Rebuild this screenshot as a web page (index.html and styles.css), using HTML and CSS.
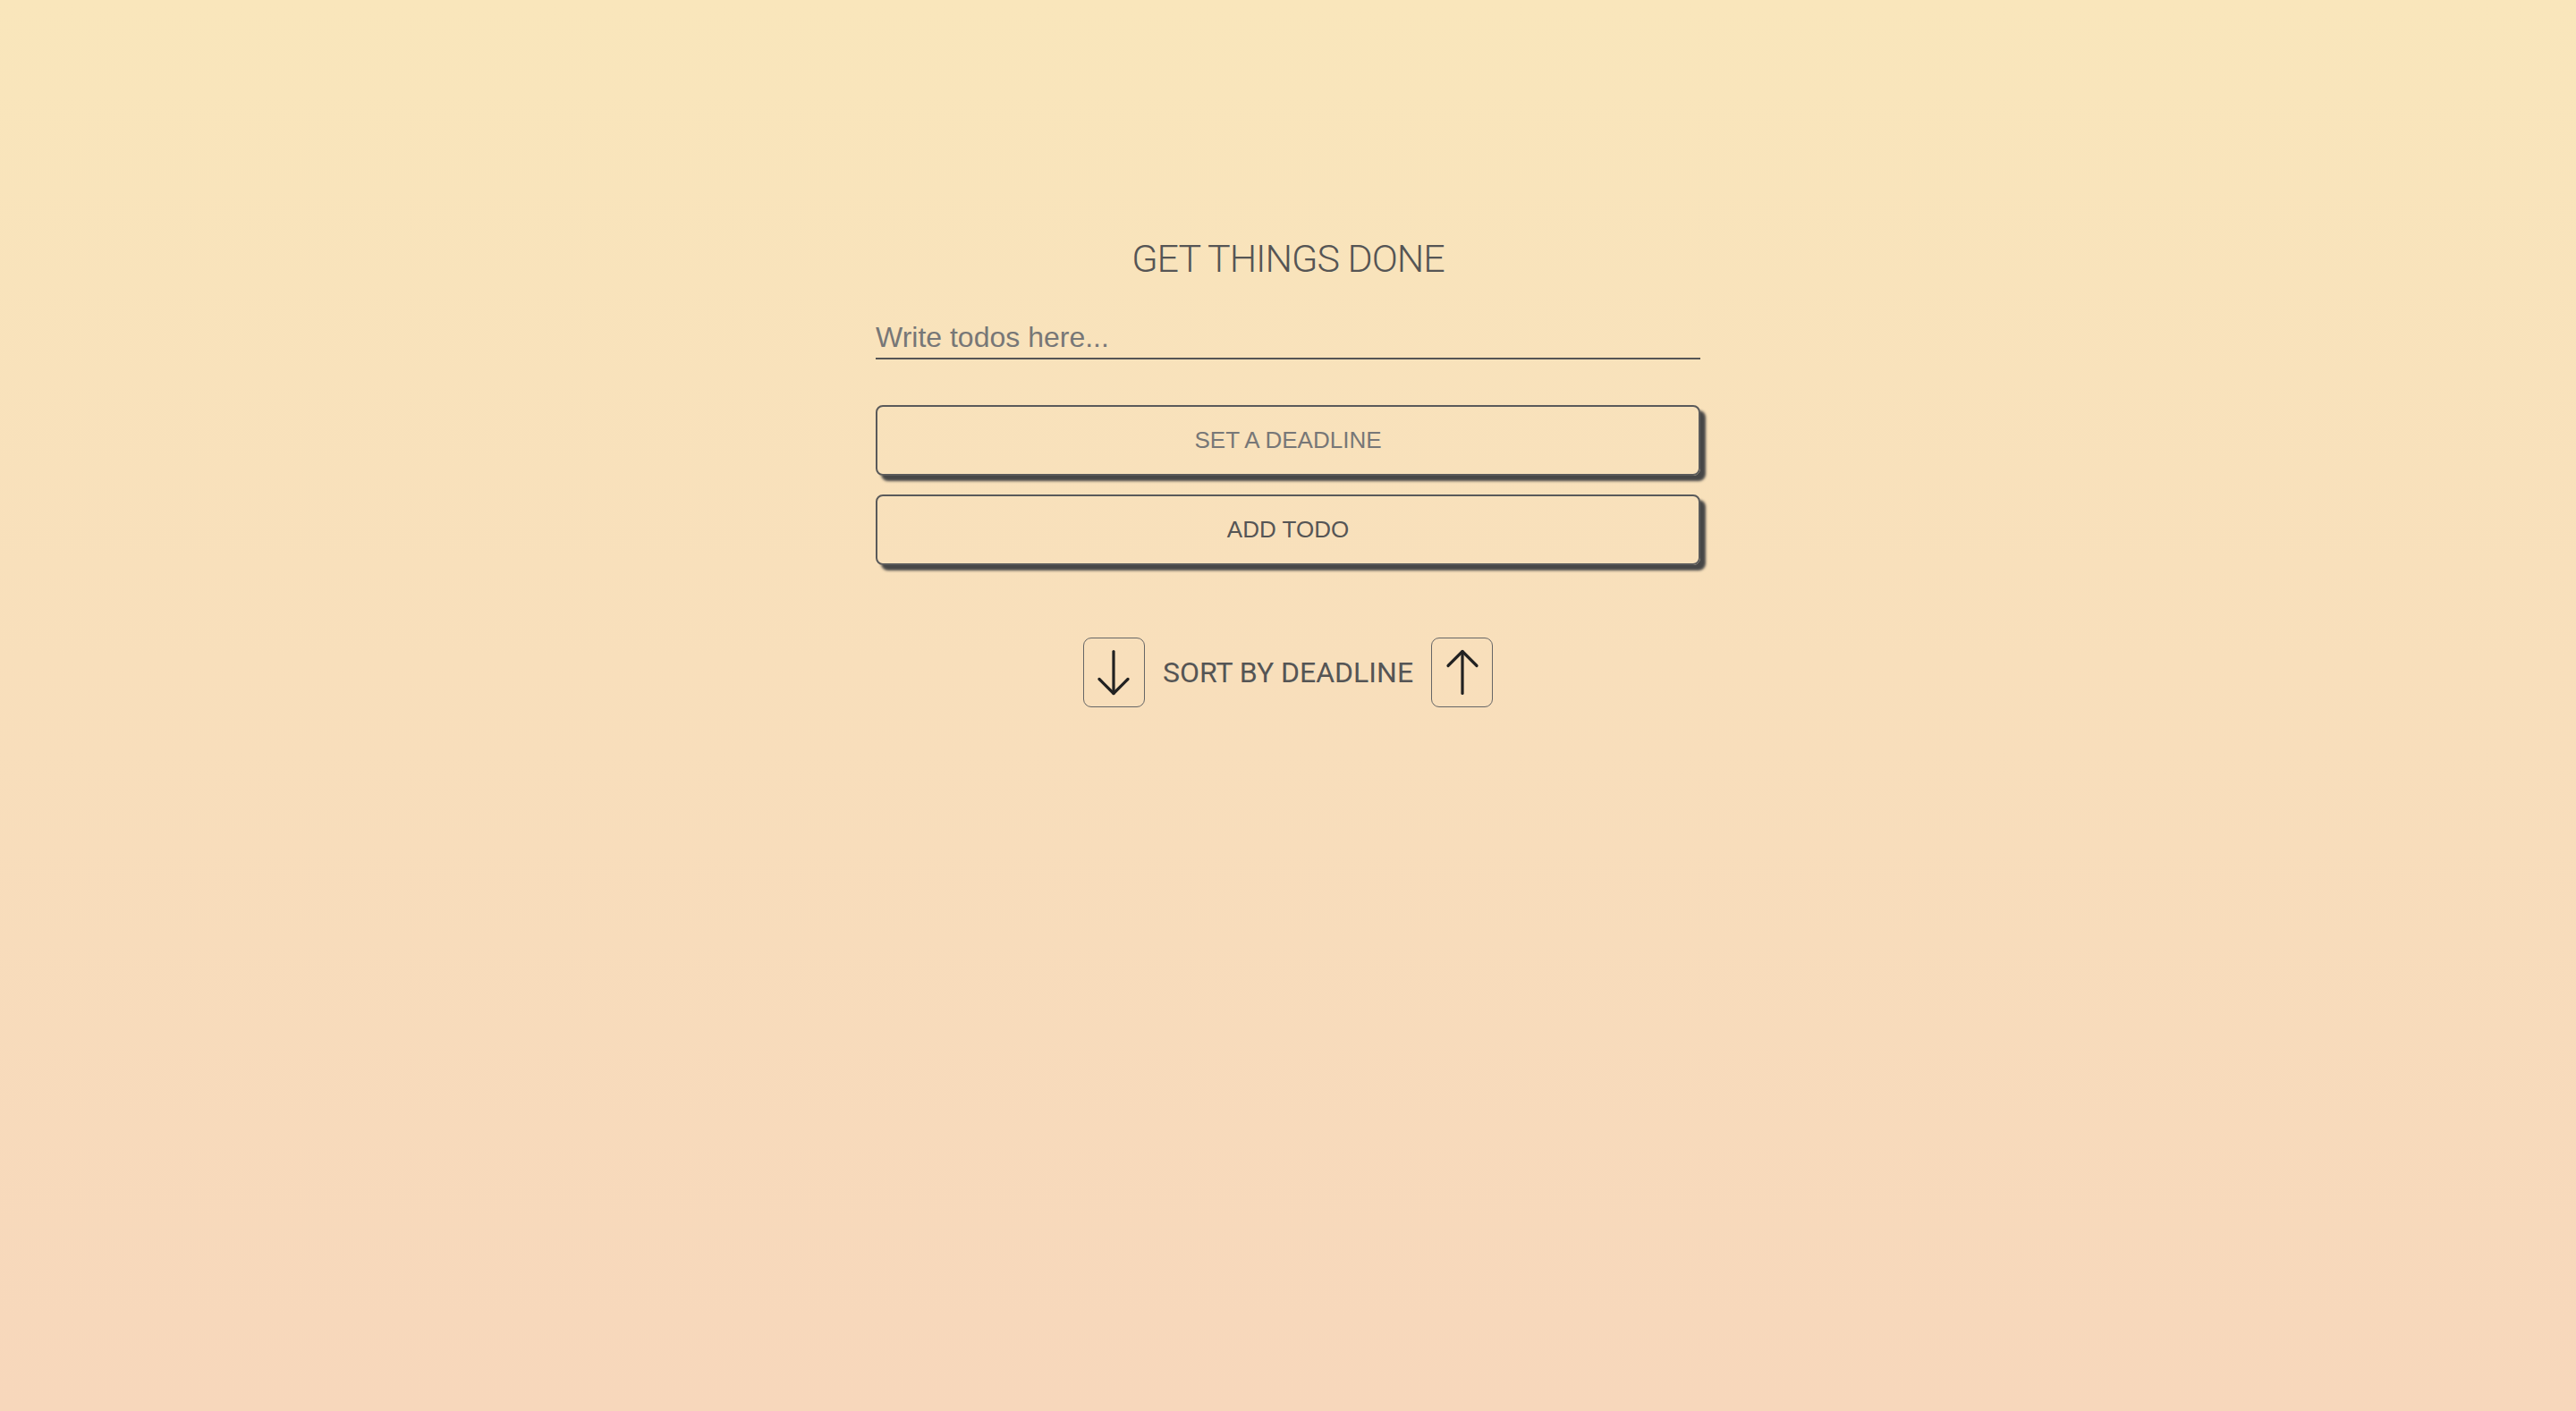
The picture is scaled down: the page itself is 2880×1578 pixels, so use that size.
FILE: index.html
```html
<!DOCTYPE html>
<html lang="en">
<head>
<meta charset="utf-8">
<title>Get Things Done</title>
<link rel="stylesheet" href="styles.css">
</head>
<body>
<main class="app">
  <h1 class="title">GET THINGS DONE</h1>
  <form class="todo-form">
    <input class="todo-input" type="text" placeholder="Write todos here...">
    <button type="button" class="btn btn-deadline">SET A DEADLINE</button>
    <button type="button" class="btn btn-add">ADD TODO</button>
  </form>
  <div class="sort-row">
    <button type="button" class="sort-btn" aria-label="Sort descending">
      <svg width="40" height="52" viewBox="0 0 40 52" fill="none" stroke="#222" stroke-width="3.2" stroke-linecap="round" stroke-linejoin="round">
        <line x1="20" y1="2.5" x2="20" y2="49.5"/>
        <polyline points="4,33.5 20,49.5 36,33.5"/>
      </svg>
    </button>
    <span class="sort-label">SORT BY DEADLINE</span>
    <button type="button" class="sort-btn" aria-label="Sort ascending">
      <svg width="40" height="52" viewBox="0 0 40 52" fill="none" stroke="#222" stroke-width="3.2" stroke-linecap="round" stroke-linejoin="round">
        <line x1="20" y1="2.5" x2="20" y2="49.5"/>
        <polyline points="4,18.5 20,2.5 36,18.5"/>
      </svg>
    </button>
  </div>
</main>
</body>
</html>
```
FILE: styles.css
```css
html, body {
  margin: 0;
  padding: 0;
}

body {
  min-height: 100vh;
  background: linear-gradient(180deg, #f9e6bb 0%, #f7d7bb 100%);
  font-family: "Liberation Sans", Arial, sans-serif;
  color: #555;
}

.app {
  width: 922px;
  margin: 0 auto;
  padding-top: 263px;
  display: flex;
  flex-direction: column;
}

.title {
  margin: 0;
  font-family: Roboto, "Liberation Sans", sans-serif;
  font-weight: 300;
  font-size: 43px;
  letter-spacing: -1px;
  line-height: 53px;
  text-align: center;
  color: #555;
}

.todo-form {
  display: flex;
  flex-direction: column;
  margin-top: 43px;
}

.todo-input {
  font-family: "Liberation Sans", Arial, sans-serif;
  font-size: 32px;
  line-height: 37px;
  height: 43px;
  padding: 0 0 4px 0;
  margin: 0 0 51px 0;
  border: none;
  border-bottom: 2px solid #555;
  background: transparent;
  color: #555;
  outline: none;
  box-sizing: border-box;
}

.todo-input::placeholder {
  color: #777;
}

.btn {
  font-family: "Liberation Sans", Arial, sans-serif;
  font-size: 26px;
  height: 79px;
  border: 2px solid #5a5a5a;
  border-radius: 8px;
  background: transparent;
  box-shadow: 6px 6px 3px #474747;
  cursor: pointer;
  padding: 0;
  margin: 0;
}

.btn-deadline {
  color: #777;
}

.btn-add {
  color: #555;
  margin-top: 21px;
}

.sort-row {
  margin-top: 81px;
  display: flex;
  justify-content: center;
  align-items: center;
  gap: 20px;
}

.sort-btn {
  width: 69px;
  height: 78px;
  border: 1px solid #666;
  border-radius: 9px;
  background: transparent;
  padding: 0;
  display: flex;
  align-items: center;
  justify-content: center;
  cursor: pointer;
}

.sort-label {
  font-family: Roboto, "Liberation Sans", sans-serif;
  font-size: 32px;
  font-weight: 400;
  color: #555;
}
```
